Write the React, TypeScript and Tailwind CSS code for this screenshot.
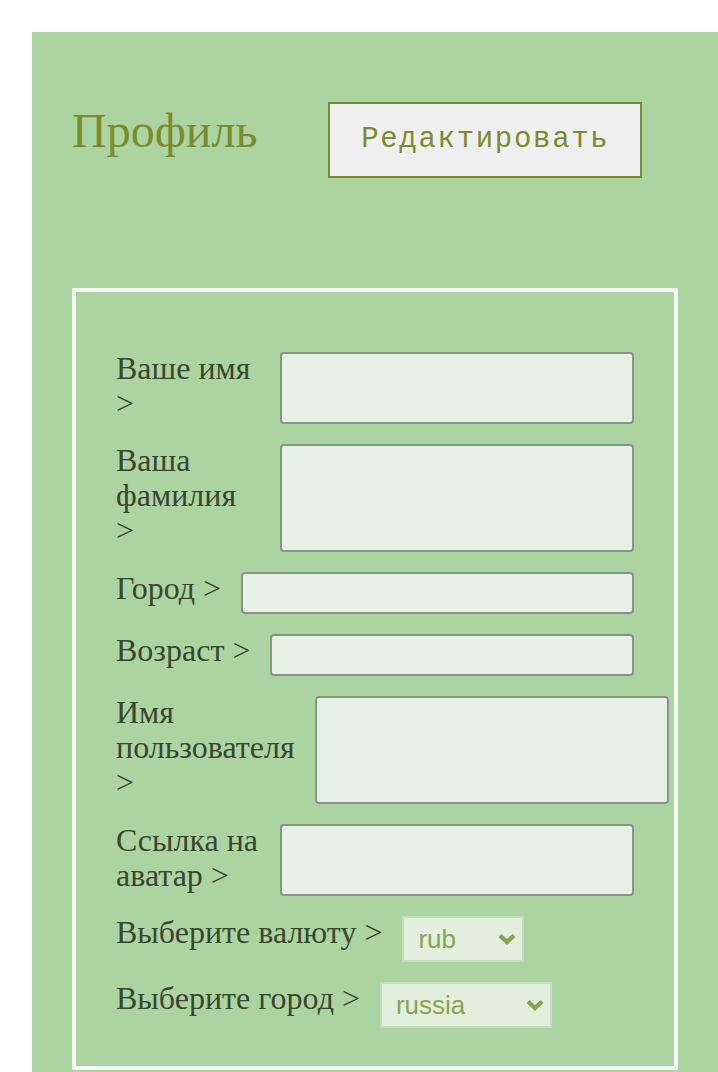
import React from 'react';

const serif = { fontFamily: '"Liberation Serif", serif' };

type Field = { label: string; h: string };

const fields: Field[] = [
  { label: 'Ваше имя >', h: 'h-[72px]' },
  { label: 'Ваша фамилия >', h: 'h-[108px]' },
  { label: 'Город >', h: 'h-[42px]' },
  { label: 'Возраст >', h: 'h-[42px]' },
  { label: 'Имя пользователя >', h: 'h-[108px]' },
  { label: 'Ссылка на аватар >', h: 'h-[72px]' },
];

const Chevron = () => (
  <svg
    className="pointer-events-none absolute right-[7px] top-1/2 h-[12px] w-[20px] -translate-y-1/2"
    viewBox="0 0 20 12"
    fill="none"
    stroke="#86a356"
    strokeWidth={4.4}
    strokeLinejoin="miter"
  >
    <path d="M3 2.5l7 6.5 7-6.5" />
  </svg>
);

const SelectBox = ({ value, options, w }: { value: string; options: string[]; w: string }) => (
  <div className={`relative ${w} h-[46px] shrink-0`}>
    <select
      defaultValue={value}
      className="h-full w-full appearance-none border-2 border-[#c9dcc2] bg-[#e2efdc] pl-[14px] text-[26px] text-[#86a356] outline-none"
      style={{ fontFamily: '"Liberation Sans", Arial, sans-serif' }}
    >
      {options.map((o) => (
        <option key={o}>{o}</option>
      ))}
    </select>
    <Chevron />
  </div>
);

export default function App() {
  return (
    <div className="h-[1072px] w-[718px] overflow-hidden bg-white pl-8 pt-8">
      <div className="min-h-[1100px] w-[720px] bg-[#acd4a0] pl-10 pt-[70px]">
        <div className="flex items-baseline gap-[71px]">
          <h1 className="text-[48px] leading-[56px] text-[#7b8c2c]" style={serif}>
            Профиль
          </h1>
          <button
            className="h-[76px] w-[314px] border-2 border-[#7b8c2c] bg-[#efefef] text-[29px] tracking-[1.7px] text-[#7b8c2c]"
            style={{ fontFamily: '"Liberation Mono", monospace' }}
          >
            Редактировать
          </button>
        </div>

        <form className="mt-[110px] flex w-[606px] flex-col gap-5 border-4 border-[#f4f9f2] px-10 pb-[38px] pt-[60px]">
          {fields.map((f) => (
            <div key={f.label} className="flex items-start gap-5">
              <label className="-mt-px shrink text-[32px] leading-[35px] text-[#3a4630]" style={serif}>
                {f.label}
              </label>
              <input
                className={`${f.h} shrink-0 grow basis-[354px] rounded-[4px] border-2 border-[#8a918a] bg-[#e6f1e4] outline-none`}
              />
            </div>
          ))}
          <div className="flex items-start gap-5">
            <label className="-mt-px text-[32px] leading-[35px] text-[#3a4630]" style={serif}>
              Выберите валюту &gt;
            </label>
            <SelectBox value="rub" options={['rub', 'usd', 'eur']} w="w-[122px]" />
          </div>
          <div className="flex items-start gap-5">
            <label className="-mt-px text-[32px] leading-[35px] text-[#3a4630]" style={serif}>
              Выберите город &gt;
            </label>
            <SelectBox value="russia" options={['russia', 'moscow']} w="w-[172px]" />
          </div>
        </form>
      </div>
    </div>
  );
}
